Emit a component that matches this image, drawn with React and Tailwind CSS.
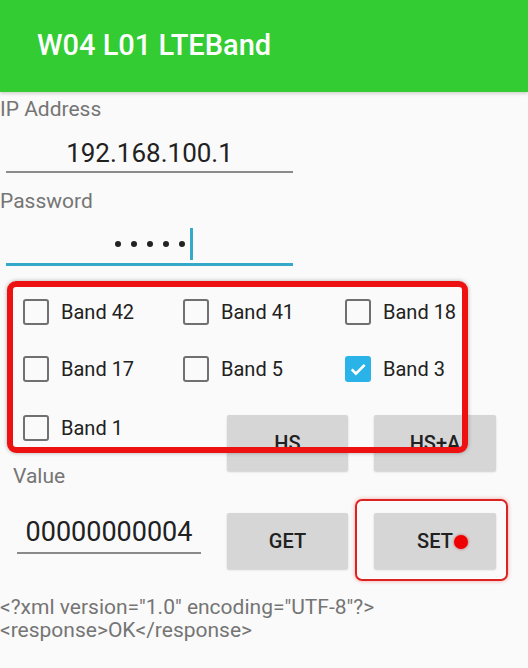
import React from 'react';

const bandRows = [
  [{ name: 'Band 42' }, { name: 'Band 41' }, { name: 'Band 18' }],
  [{ name: 'Band 17' }, { name: 'Band 5' }, { name: 'Band 3', checked: true }],
];

const colWidths = ['w-[160px]', 'w-[162px]', 'w-[140px]'];

const CheckBox = ({ label, checked }) => (
  <div className="flex items-center">
    {checked ? (
      <span className="w-[26px] h-[26px] rounded-[3px] bg-[#29b3e8] flex items-center justify-center">
        <svg width="20" height="20" viewBox="0 0 24 24" fill="none">
          <path d="M4.5 12.5l5 5L20 7" stroke="white" strokeWidth="3.2" />
        </svg>
      </span>
    ) : (
      <span className="w-[26px] h-[26px] rounded-[3px] border-2 border-[#707070]" />
    )}
    <span className="ml-[12px] text-[20px] text-[#212121]">{label}</span>
  </div>
);

const GrayButton = ({ children, className = '' }) => (
  <div
    className={`h-[56px] bg-[#d6d6d6] rounded-[2px] shadow-[0_1px_2px_rgba(0,0,0,0.18)] flex items-center justify-center text-[20px] font-medium text-[#212121] ${className}`}
  >
    {children}
  </div>
);

const App = () => {
  return (
    <div className="relative w-[528px] h-[668px] overflow-hidden bg-[#fafafa] font-['Roboto',sans-serif]">

      {/* HEADER */}
      <div className="h-[92px] bg-[#33cc33] flex items-center pl-[37px] shadow-[0_2px_3px_rgba(0,0,0,0.15)]">
        <h1 className="text-[29px] font-medium text-white">W04 L01 LTEBand</h1>
      </div>

      {/* IP */}
      <div className="mt-[5px] text-[21px] leading-[24px] text-[#757575]">IP Address</div>
      <div className="ml-[6px] w-[287px] mt-[17px] pb-[3px] border-b-2 border-[#8a8a8a] text-center text-[26px] leading-[30px] text-[#212121]">
        192.168.100.1
      </div>

      {/* PASSWORD */}
      <div className="mt-[16px] text-[21px] leading-[24px] text-[#757575]">Password</div>
      <div className="ml-[6px] w-[287px] pt-[15px] pb-[3px] border-b-[3px] border-[#35a9c9] flex items-center justify-center pl-[8px]">
        <div className="flex gap-[10px]">
          {[0, 1, 2, 3, 4].map(i => (
            <span key={i} className="w-[6px] h-[6px] rounded-full bg-[#222]" />
          ))}
        </div>
        <span className="ml-[5px] w-[3px] h-[32px] bg-[#35a9c9]" />
      </div>

      {/* BANDS */}
      <div className="mt-[17px]">
        {bandRows.map((row, r) => (
          <div key={r} className="flex h-[57px] items-center pl-[23px]">
            {row.map((b, c) => (
              <div key={b.name} className={colWidths[c]}>
                <CheckBox label={b.name} checked={b.checked} />
              </div>
            ))}
          </div>
        ))}

        <div className="flex h-[92px] items-start">
          <div className="w-[227px]">
            <div className="pl-[23px] mt-[16px]">
              <CheckBox label="Band 1" />
            </div>
            <div className="pl-[13px] mt-[21px] text-[21px] leading-[24px] text-[#757575]">Value</div>
          </div>
          <GrayButton className="mt-[18px] w-[121px]">HS</GrayButton>
          <GrayButton className="mt-[18px] ml-[26px] w-[122px]">HS+A</GrayButton>
        </div>

        <div className="flex h-[80px] items-start">
          <div className="w-[227px]">
            <div className="ml-[17px] w-[184px] mt-[27px] pb-[4px] border-b-2 border-[#8a8a8a] text-center text-[27px] leading-[32px] text-[#212121]">
              00000000004
            </div>
          </div>
          <GrayButton className="mt-[24px] w-[121px]">GET</GrayButton>
          <GrayButton className="mt-[24px] ml-[26px] w-[122px]">SET</GrayButton>
        </div>
      </div>

      {/* RESPONSE */}
      <div className="mt-[27px] text-[21px] leading-[23px] text-[#757575]">
        <div>{'<?xml version="1.0" encoding="UTF-8"?>'}</div>
        <div>{'<response>OK</response>'}</div>
      </div>

      {/* ANNOTATIONS */}
      <div className="absolute left-[7px] top-[281px] w-[461px] h-[172px] border-[6px] border-[#ee1111] rounded-[9px] shadow-[0_0_4px_rgba(0,0,0,0.3)]" />
      <div className="absolute left-[355px] top-[499px] w-[153px] h-[82px] border-2 border-[#dd2222] rounded-[7px] shadow-[0_0_4px_rgba(220,0,0,0.35)]" />
      <div className="absolute left-[454px] top-[535px] w-[14px] h-[14px] rounded-full bg-[#ee0000] shadow-[0_0_3px_rgba(200,0,0,0.6)]" />
    </div>
  );
};

export default App;
